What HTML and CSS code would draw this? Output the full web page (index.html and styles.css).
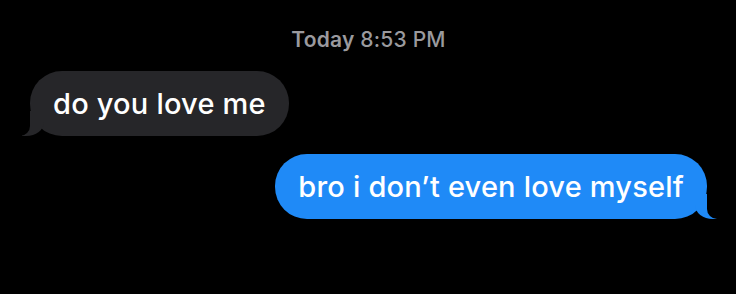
FILE: index.html
```html
<!DOCTYPE html>
<html lang="en">
<head>
    <meta charset="UTF-8">
    <meta name="viewport" content="width=device-width, initial-scale=1.0">
    <title>Messages</title>
    <link rel="stylesheet" href="styles.css">
</head>
<body>
    <div class="thread">
        <div class="stamp"><span class="day">Today</span> 8:53 PM</div>

        <div class="msg them">do you love me</div>
        <div class="msg me">bro i don’t even love myself</div>
    </div>
</body>
</html>
```

FILE: styles.css
```css
body, html {
    margin: 0;
    padding: 0;
    width: 100%;
    height: 100%;
    background-color: #000;
}

.thread {
    display: flex;
    flex-direction: column;
    padding: 28px 29px 0 30px;
    font-family: "Inter", "Liberation Sans", sans-serif;
}

.stamp {
    align-self: center;
    color: #9a9a9e;
    font-size: 21px;
    font-weight: 500;
    line-height: 24px;
    letter-spacing: 0.2px;
}

.stamp .day {
    font-weight: 600;
}

.msg {
    position: relative;
    padding: 14px 23px;
    border-radius: 32px;
    font-size: 29px;
    font-weight: 500;
    line-height: 37px;
    letter-spacing: 0.2px;
    color: #fff;
}

.them {
    align-self: flex-start;
    margin-top: 19px;
    background-color: #262629;
}

.me {
    align-self: flex-end;
    margin-top: 18px;
    background-color: #1f8af7;
}

/* tails */
.msg::before,
.msg::after {
    content: "";
    position: absolute;
    bottom: 0;
    height: 25px;
}

.them::before {
    left: -8px;
    width: 22px;
    background-color: #262629;
    border-bottom-right-radius: 18px 14px;
}

.them::after {
    left: -26px;
    width: 26px;
    background-color: #000;
    border-bottom-right-radius: 10px;
}

.me::before {
    right: -10px;
    width: 22px;
    background-color: #1f8af7;
    border-bottom-left-radius: 18px 14px;
}

.me::after {
    right: -26px;
    width: 26px;
    background-color: #000;
    border-bottom-left-radius: 10px;
}
```
